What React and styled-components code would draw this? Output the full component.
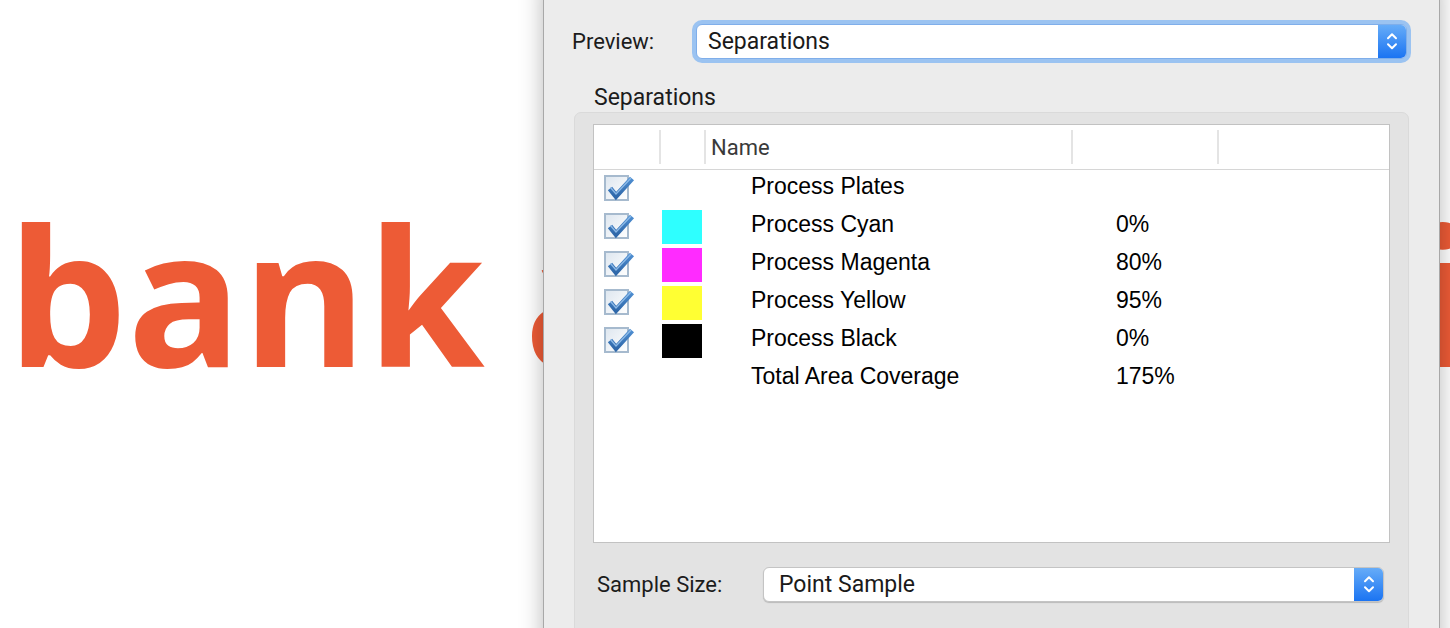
import React from 'react'
import styled, { createGlobalStyle } from 'styled-components';

const GlobalStyle = createGlobalStyle`
  html, body {
    margin: 0;
    padding: 0;
    background: #FFFFFF;
  }
  body {
    font-family: "Liberation Sans", Arial, sans-serif;
  }
`;

const Page = styled.div`
  position: relative;
  width: 1450px;
  height: 628px;
  overflow: hidden;
  background: #FFFFFF;
`;

const BigWord = styled.div`
  padding: 199px 0 0 7px;
  font-family: "Open Sans", sans-serif;
  font-weight: 700;
  font-size: 190px;
  line-height: 1;
  word-spacing: -10px;
  color: #ED5B36;
  white-space: nowrap;
`;

const WordGap = styled.span`
  display: inline-block;
  width: ${p => p.width}px;
`;

const Panel = styled.div`
  position: absolute;
  left: 543px;
  top: -20px;
  width: 835px;
  height: 700px;
  padding: 40px 30px 0 30px;
  background: #ECECEC;
  border-left: 1px solid #A8A8A8;
  border-right: 1px solid #A8A8A8;
  box-shadow: 0 0 22px rgba(0, 0, 0, 0.28);
  display: flex;
  flex-direction: column;
`;

const FieldRow = styled.div`
  display: flex;
  align-items: center;
  height: ${p => p.height}px;
  margin: ${p => p.margin};
`;

const FieldLabel = styled.div`
  width: ${p => p.width}px;
  flex-shrink: 0;
  font-family: Roboto, "Liberation Sans", sans-serif;
  font-size: 22px;
  color: #1C1C1C;
`;

const Popup = styled.div`
  flex: 1;
  display: flex;
  height: ${p => p.height}px;
  background: #FFFFFF;
  border-radius: 6px;
  border: 1px solid ${p => (p.focused ? '#7FAEEA' : '#C4C4C4')};
  box-shadow: ${p => (p.focused
    ? '0 0 0 4px #9BC3F1'
    : '0 1px 1px rgba(0, 0, 0, 0.18)')};
  overflow: hidden;
`;

const PopupValue = styled.div`
  flex: 1;
  display: flex;
  align-items: center;
  padding-left: ${p => p.indent}px;
  font-family: Roboto, "Liberation Sans", sans-serif;
  font-size: 23px;
  color: #1A1A1A;
`;

const PopupArrows = styled.div`
  width: ${p => p.width}px;
  display: flex;
  align-items: center;
  justify-content: center;
  background: linear-gradient(#66ACF8, #1B74F2);
`;

const GroupTitle = styled.div`
  margin: 23px 0 2px 20px;
  line-height: 24px;
  font-family: Roboto, "Liberation Sans", sans-serif;
  font-size: 23px;
  color: #1C1C1C;
`;

const GroupBox = styled.div`
  flex: 1;
  background: #E3E3E3;
  border: 1px solid #DADADA;
  border-radius: 7px;
  padding: 11px 18px 0 18px;
`;

const Table = styled.div`
  height: 417px;
  background: #FFFFFF;
  border: 1px solid #C2C2C2;
`;

const columns = '65px 45px 367px 146px 1fr';

const HeaderRow = styled.div`
  display: grid;
  grid-template-columns: ${columns};
  height: 44px;
  border-bottom: 1px solid #D6D6D6;
`;

const HeaderCell = styled.div`
  margin: 5px 0;
  border-left: ${p => (p.divider ? '2px solid #E4E4E4' : 'none')};
  display: flex;
  align-items: center;
  padding-left: 5px;
  font-family: Roboto, "Liberation Sans", sans-serif;
  font-size: 22px;
  color: #3A3A3A;
`;

const Row = styled.div`
  display: grid;
  grid-template-columns: ${columns};
  height: 38px;
  align-items: center;
`;

const Cell = styled.div`
  padding-left: ${p => p.indent}px;
  display: flex;
  align-items: center;
`;

const TextCell = styled.div`
  padding-left: ${p => p.indent}px;
  padding-bottom: 5px;
  font-size: 23px;
  color: #000000;
  white-space: nowrap;
`;

const Swatch = styled.div`
  width: 40px;
  height: 34px;
  background: ${p => p.color};
`;

function Chevrons({ size }) {
  return (
    <svg width={size} height={size * 1.6} viewBox="0 0 14 22" fill="none">
      <polyline points="3,8 7,4 11,8" stroke="#FFFFFF" strokeWidth="2" strokeLinecap="round" strokeLinejoin="round" />
      <polyline points="3,14 7,18 11,14" stroke="#FFFFFF" strokeWidth="2" strokeLinecap="round" strokeLinejoin="round" />
    </svg>
  );
}

function CheckBox() {
  return (
    <svg width="32" height="28" viewBox="0 0 32 28" style={{ overflow: 'visible' }}>
      <defs>
        <linearGradient id="cbFill" x1="0" y1="0" x2="1" y2="1">
          <stop offset="0" stopColor="#DDE6EF" />
          <stop offset="1" stopColor="#FFFFFF" />
        </linearGradient>
        <linearGradient id="cbTick" x1="0" y1="0" x2="0" y2="1">
          <stop offset="0" stopColor="#4F8FD2" />
          <stop offset="1" stopColor="#2F68AA" />
        </linearGradient>
      </defs>
      <rect x="1" y="1" width="23" height="24" fill="url(#cbFill)" stroke="#A6BACE" strokeWidth="2" />
      <path d="M6 13.5 L12 21 L28 3.5" fill="none" stroke="url(#cbTick)" strokeWidth="5.5" strokeLinejoin="miter" />
      <path d="M6.5 12.5 L12 19 L27 3" fill="none" stroke="#8CB9E6" strokeWidth="1.4" />
    </svg>
  );
}

const separations = [
  { name: 'Process Plates', check: true },
  { name: 'Process Cyan', check: true, color: '#2EFFFF', value: '0%' },
  { name: 'Process Magenta', check: true, color: '#FF2BFF', value: '80%' },
  { name: 'Process Yellow', check: true, color: '#FFFF33', value: '95%' },
  { name: 'Process Black', check: true, color: '#000000', value: '0%' },
  { name: 'Total Area Coverage', value: '175%' },
];

export default function App() {
  return (
    <Page>
      <GlobalStyle />
      <BigWord>
        bank a<WordGap width={775} />i
      </BigWord>
      <Panel>
        <FieldRow height={43} margin="0 2px 0 -2px">
          <FieldLabel width={124}>Preview:</FieldLabel>
          <Popup focused height={33}>
            <PopupValue indent={11}>Separations</PopupValue>
            <PopupArrows width={28}>
              <Chevrons size={14} />
            </PopupArrows>
          </Popup>
        </FieldRow>
        <GroupTitle>Separations</GroupTitle>
        <GroupBox>
          <Table>
            <HeaderRow>
              <HeaderCell />
              <HeaderCell divider />
              <HeaderCell divider>Name</HeaderCell>
              <HeaderCell divider />
              <HeaderCell divider />
            </HeaderRow>
            {separations.map(s => (
              <Row key={s.name}>
                <Cell indent={10}>{s.check && <CheckBox />}</Cell>
                <Cell indent={3}>{s.color && <Swatch color={s.color} />}</Cell>
                <TextCell indent={47}>{s.name}</TextCell>
                <TextCell indent={45}>{s.value}</TextCell>
                <div />
              </Row>
            ))}
          </Table>
          <FieldRow height={34} margin="24px 6px 0 4px">
            <FieldLabel width={166}>Sample Size:</FieldLabel>
            <Popup height={33}>
              <PopupValue indent={15}>Point Sample</PopupValue>
              <PopupArrows width={29}>
                <Chevrons size={14} />
              </PopupArrows>
            </Popup>
          </FieldRow>
        </GroupBox>
      </Panel>
    </Page>
  );
}
